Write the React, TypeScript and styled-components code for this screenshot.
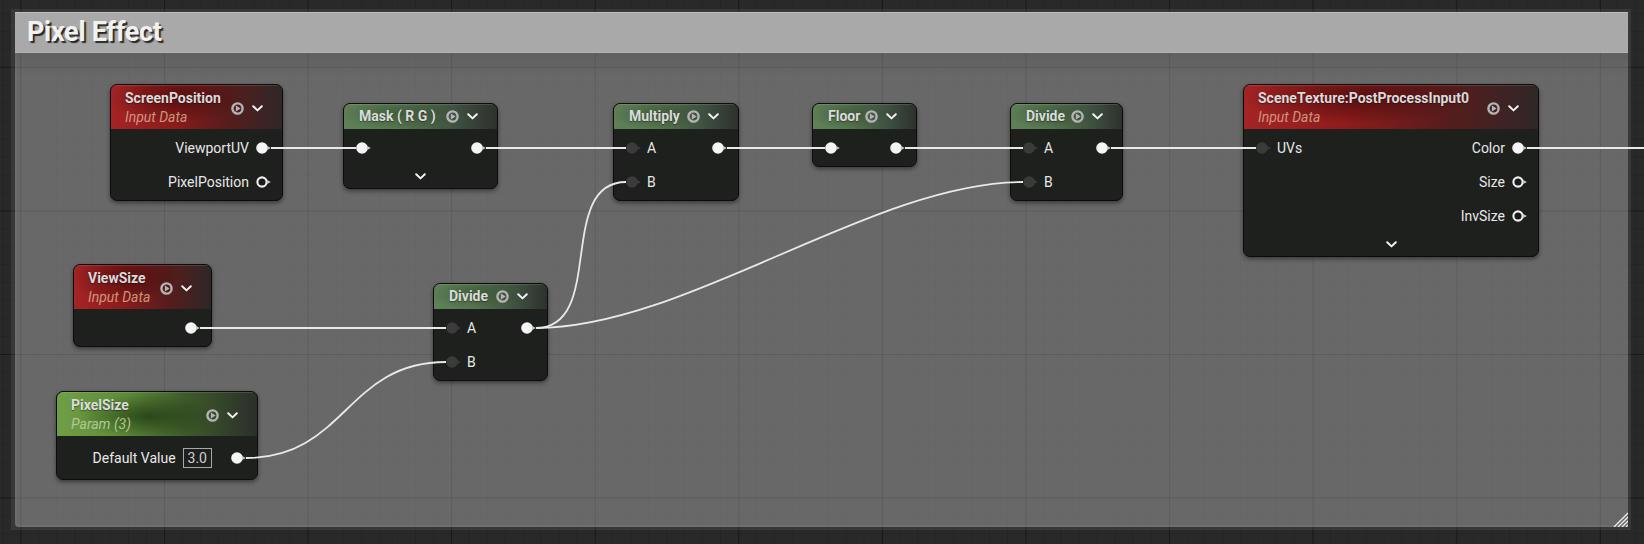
import React from 'react';
import styled, { createGlobalStyle, css } from 'styled-components';

type PinKind = 'on' | 'ring' | 'off';
type Variant = 'input' | 'op' | 'param';

interface RowDef {
  inPin?: PinKind;
  inLabel?: string;
  outLabel?: string;
  outPin?: PinKind;
  value?: string;
  tall?: boolean;
}

interface NodeDef {
  id: string;
  x: number;
  y: number;
  w: number;
  title: string;
  subtitle?: string;
  variant: Variant;
  rows: RowDef[];
  chevron?: boolean;
}

const GlobalStyle = createGlobalStyle`
  html, body {
    margin: 0;
    padding: 0;
    background: #272727;
  }
  body {
    font-family: Roboto, "Liberation Sans", sans-serif;
  }
`;

const Canvas = styled.div`
  position: relative;
  width: 1644px;
  height: 544px;
  overflow: hidden;
  background-color: #292929;
  background-image:
    linear-gradient(to right, rgba(0, 0, 0, 0.36) 1px, transparent 1px),
    linear-gradient(to bottom, rgba(0, 0, 0, 0.36) 1px, transparent 1px),
    linear-gradient(to right, rgba(0, 0, 0, 0.09) 1px, transparent 1px),
    linear-gradient(to bottom, rgba(0, 0, 0, 0.09) 1px, transparent 1px);
  background-size: 143.6px 143.6px, 143.6px 143.6px, 17.95px 17.95px, 17.95px 17.95px;
  background-position: 20.4px 66.8px, 20.4px 66.8px, 20.4px 66.8px, 20.4px 66.8px;
`;

const CommentBox = styled.div`
  position: absolute;
  left: 11px;
  top: 9px;
  width: 1620px;
  height: 521px;
  box-sizing: border-box;
  padding: 3px 3px 3px 4px;
  display: flex;
  flex-direction: column;
  background: rgba(255, 255, 255, 0.075);
`;

const CommentTitle = styled.div`
  height: 41px;
  box-sizing: border-box;
  display: flex;
  align-items: center;
  padding: 0 12px 2px;
  background: #a9a9a9;
  border-top: 1px solid #bdbdbd;
  border-bottom: 1px solid #b3b3b3;
  color: #f2f2f2;
  font-weight: 700;
  font-size: 27px;
  letter-spacing: -0.3px;
  text-shadow: 2px 2px 1px #2a2a2a;
`;

const CommentBody = styled.div`
  flex: 1;
  border-radius: 0 0 4px 4px;
  background:
    linear-gradient(to bottom, rgba(0, 0, 0, 0.08), transparent 24px),
    rgba(255, 255, 255, 0.245);
  box-shadow: inset 2px 0 0 rgba(255, 255, 255, 0.04), inset 0 -2px 0 rgba(255, 255, 255, 0.05);
`;

const ResizeHandle = styled.svg`
  position: absolute;
  right: 3px;
  bottom: 3px;
`;

const NodeBox = styled.div<{ $x: number; $y: number; $w: number }>`
  position: absolute;
  left: ${(p) => p.$x}px;
  top: ${(p) => p.$y}px;
  width: ${(p) => p.$w}px;
  box-sizing: border-box;
  display: flex;
  flex-direction: column;
  background: #1e201e;
  border: 1px solid #0c0c0c;
  border-radius: 7px;
  overflow: hidden;
  box-shadow: 0 2px 4px rgba(0, 0, 0, 0.45);
`;

const headerBg: Record<Variant, ReturnType<typeof css>> = {
  input: css`
    background:
      radial-gradient(ellipse 40% 60% at 38% 28%, rgba(45, 6, 6, 0.55), transparent 100%),
      linear-gradient(to right, #a52424 0%, #8f1b1b 35%, #581c1c 68%, #2f2727 100%);
  `,
  op: css`
    background:
      radial-gradient(ellipse 40% 60% at 35% 40%, rgba(30, 45, 28, 0.35), transparent 100%),
      linear-gradient(to right, #5f8158 0%, #56774f 35%, #3f5140 72%, #2d312d 100%);
  `,
  param: css`
    background:
      radial-gradient(ellipse 35% 50% at 45% 55%, rgba(25, 50, 15, 0.7), transparent 100%),
      linear-gradient(to right, #6f9f45 0%, #5d8a38 35%, #3d5a2a 65%, #2b2f2a 100%);
  `,
};

const Header = styled.div<{ $variant: Variant; $tall: boolean }>`
  height: ${(p) => (p.$tall ? 44 : 25)}px;
  box-sizing: border-box;
  display: flex;
  align-items: center;
  gap: 4px;
  padding: ${(p) => (p.$tall ? '2px 19px 0 14px' : '0 19px 0 15px')};
  ${(p) => headerBg[p.$variant]}
  box-shadow: inset 0 1px 0 rgba(255, 255, 255, 0.12);
`;

const TitleBlock = styled.div`
  flex: 1;
  min-width: 0;
  display: flex;
  flex-direction: column;
`;

const Title = styled.div`
  font-size: 14px;
  font-weight: 700;
  line-height: 19px;
  color: #dadada;
  white-space: nowrap;
  text-shadow: 0 1px 1px rgba(0, 0, 0, 0.4);
`;

const Subtitle = styled.div<{ $variant: Variant }>`
  font-size: 14px;
  font-style: italic;
  line-height: 19px;
  color: ${(p) => (p.$variant === 'param' ? '#b4c792' : '#c9977c')};
  white-space: nowrap;
`;

const HeaderIcons = styled.div`
  display: flex;
  align-items: center;
  gap: 8px;
`;

const Body = styled.div`
  display: flex;
  flex-direction: column;
  padding: 2px 0 1px;
`;

const Row = styled.div<{ $tall?: boolean }>`
  height: ${(p) => (p.$tall ? 40 : 34)}px;
  display: flex;
  align-items: center;
  justify-content: space-between;
  padding: 0 11px 0 12px;
`;

const Side = styled.div`
  display: flex;
  align-items: center;
  gap: 7px;
`;

const InSide = styled(Side)`
  gap: 6px;
`;

const PinLabel = styled.span`
  font-size: 14px;
  color: #e8e8e8;
  white-space: nowrap;
`;

const ValueBox = styled.span`
  font-size: 14px;
  line-height: 18px;
  color: #cfcfcf;
  border: 1px solid #a8a8a8;
  padding: 0 4px;
  margin-right: 12px;
`;

const ChevronRow = styled.div`
  height: 22px;
  display: flex;
  align-items: center;
  justify-content: center;
`;

const IconSvg = styled.svg`
  display: block;
  flex: none;
`;

const WireLayer = styled.svg`
  position: absolute;
  left: 0;
  top: 0;
  pointer-events: none;
`;

const Pin = ({ kind }: { kind: PinKind }) => (
  <IconSvg width={15} height={12} viewBox="0 0 15 12">
    {kind === 'ring' ? (
      <circle cx={6} cy={6} r={4.6} fill="#1b1b1b" stroke="#f0f0f0" strokeWidth={2.1} />
    ) : (
      <circle cx={6} cy={6} r={5.8} fill={kind === 'on' ? '#f5f5f5' : '#3a3b3a'} />
    )}
    <polygon points="11.2,3.9 14.8,6 11.2,8.1" fill={kind === 'off' ? '#3a3b3a' : '#c9c9c9'} />
  </IconSvg>
);

const PlayIcon = () => (
  <IconSvg width={13} height={13} viewBox="0 0 13 13">
    <circle cx={6.5} cy={6.5} r={5.1} fill="none" stroke="#b4b4b4" strokeWidth={2.4} />
    <polygon points="4.9,3.6 9.6,6.5 4.9,9.4" fill="#b4b4b4" />
  </IconSvg>
);

const Chevron = () => (
  <IconSvg width={11} height={7} viewBox="0 0 11 7">
    <polyline points="1.2,1.2 5.5,5.4 9.8,1.2" fill="none" stroke="#f2f2f2" strokeWidth={2} strokeLinecap="round" strokeLinejoin="round" />
  </IconSvg>
);

const nodes: NodeDef[] = [
  {
    id: 'screenpos', x: 110, y: 84, w: 173, title: 'ScreenPosition', subtitle: 'Input Data', variant: 'input',
    rows: [{ outLabel: 'ViewportUV', outPin: 'on' }, { outLabel: 'PixelPosition', outPin: 'ring' }],
  },
  {
    id: 'mask', x: 343, y: 103, w: 155, title: 'Mask ( R G )', variant: 'op',
    rows: [{ inPin: 'on', outPin: 'on' }], chevron: true,
  },
  {
    id: 'multiply', x: 613, y: 103, w: 126, title: 'Multiply', variant: 'op',
    rows: [{ inPin: 'off', inLabel: 'A', outPin: 'on' }, { inPin: 'off', inLabel: 'B' }],
  },
  {
    id: 'floor', x: 812, y: 103, w: 105, title: 'Floor', variant: 'op',
    rows: [{ inPin: 'on', outPin: 'on' }],
  },
  {
    id: 'divide1', x: 1010, y: 103, w: 113, title: 'Divide', variant: 'op',
    rows: [{ inPin: 'off', inLabel: 'A', outPin: 'on' }, { inPin: 'off', inLabel: 'B' }],
  },
  {
    id: 'scenetex', x: 1243, y: 84, w: 296, title: 'SceneTexture:PostProcessInput0', subtitle: 'Input Data', variant: 'input',
    rows: [
      { inPin: 'off', inLabel: 'UVs', outLabel: 'Color', outPin: 'on' },
      { outLabel: 'Size', outPin: 'ring' },
      { outLabel: 'InvSize', outPin: 'ring' },
    ],
    chevron: true,
  },
  {
    id: 'viewsize', x: 73, y: 264, w: 139, title: 'ViewSize', subtitle: 'Input Data', variant: 'input',
    rows: [{ outPin: 'on' }],
  },
  {
    id: 'divide2', x: 433, y: 283, w: 115, title: 'Divide', variant: 'op',
    rows: [{ inPin: 'off', inLabel: 'A', outPin: 'on' }, { inPin: 'off', inLabel: 'B' }],
  },
  {
    id: 'pixelsize', x: 56, y: 391, w: 202, title: 'PixelSize', subtitle: 'Param (3)', variant: 'param',
    rows: [{ outLabel: 'Default Value', value: '3.0', outPin: 'on', tall: true }],
  },
];

const wires: string[] = [
  'M271 148 L356 148',
  'M486 148 L626 148',
  'M727 148 L825 148',
  'M905 148 L1023 148',
  'M1111 148 L1256 148',
  'M1527 148 L1644 148',
  'M200 328 L446 328',
  'M246 458 C346 458, 346 362, 446 362',
  'M536 328 C606 328, 556 182, 626 182',
  'M536 328 C686 328, 873 182, 1023 182',
];

const GraphNode = ({ node }: { node: NodeDef }) => {
  const tall = !!node.subtitle;
  return (
    <NodeBox $x={node.x} $y={node.y} $w={node.w}>
      <Header $variant={node.variant} $tall={tall}>
        <TitleBlock>
          <Title>{node.title}</Title>
          {node.subtitle && <Subtitle $variant={node.variant}>{node.subtitle}</Subtitle>}
        </TitleBlock>
        <HeaderIcons>
          <PlayIcon />
          <Chevron />
        </HeaderIcons>
      </Header>
      <Body>
        {node.rows.map((r, i) => (
          <Row key={i} $tall={r.tall}>
            <InSide>
              {r.inPin && <Pin kind={r.inPin} />}
              {r.inLabel && <PinLabel>{r.inLabel}</PinLabel>}
            </InSide>
            <Side>
              {r.outLabel && <PinLabel>{r.outLabel}</PinLabel>}
              {r.value && <ValueBox>{r.value}</ValueBox>}
              {r.outPin && <Pin kind={r.outPin} />}
            </Side>
          </Row>
        ))}
        {node.chevron && (
          <ChevronRow>
            <Chevron />
          </ChevronRow>
        )}
      </Body>
    </NodeBox>
  );
};

export default function App() {
  return (
    <>
      <GlobalStyle />
      <Canvas>
        <CommentBox>
          <CommentTitle>Pixel Effect</CommentTitle>
          <CommentBody />
          <ResizeHandle width={15} height={15} viewBox="0 0 15 15">
            <g stroke="#f0f0f0" strokeWidth={1.3}>
              <line x1={1} y1={15} x2={15} y2={1} />
              <line x1={5} y1={15} x2={15} y2={5} />
              <line x1={9} y1={15} x2={15} y2={9} />
              <line x1={13} y1={15} x2={15} y2={13} />
            </g>
          </ResizeHandle>
        </CommentBox>
        {nodes.map((n) => (
          <GraphNode key={n.id} node={n} />
        ))}
        <WireLayer width={1644} height={544} viewBox="0 0 1644 544">
          {wires.map((d, i) => (
            <path key={i} d={d} fill="none" stroke="#e9e9e9" strokeWidth={1.8} />
          ))}
        </WireLayer>
      </Canvas>
    </>
  );
}
